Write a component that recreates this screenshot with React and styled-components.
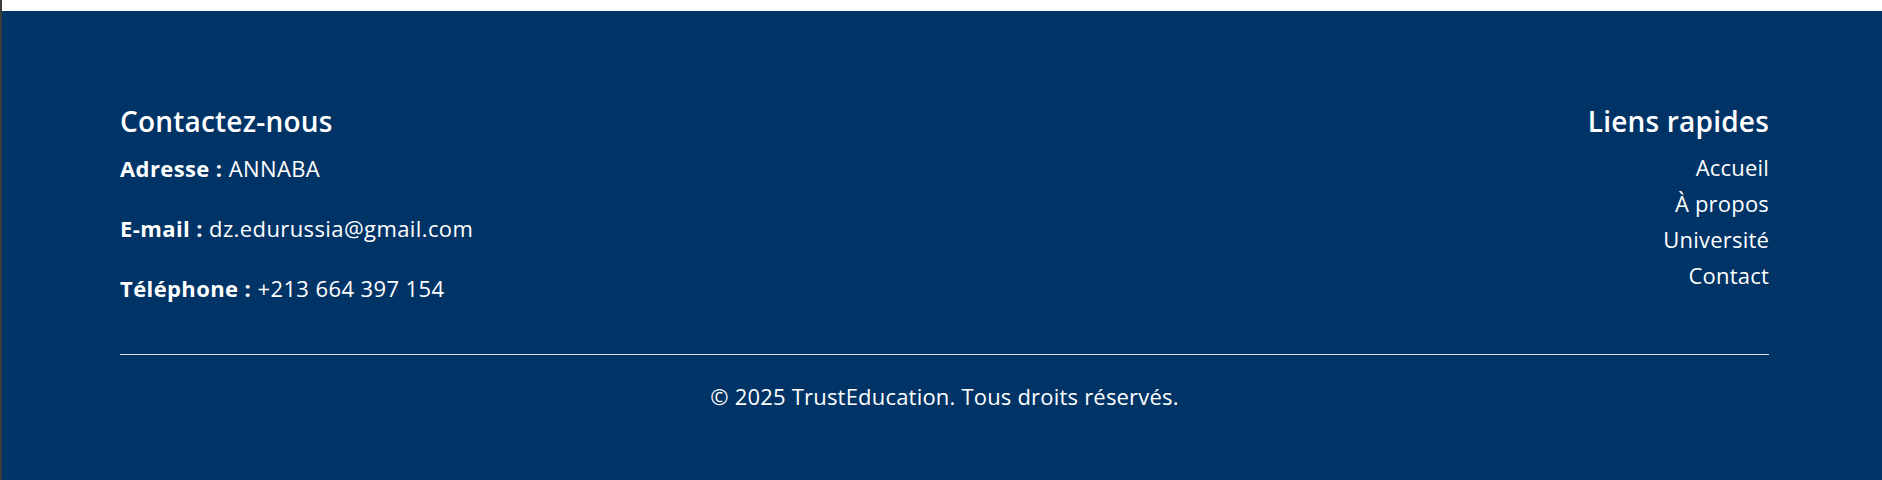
import React from 'react';
import styled, { createGlobalStyle } from 'styled-components';

const GlobalStyle = createGlobalStyle`
  html, body {
    margin: 0;
    padding: 0;
    background: #ffffff;
  }
  body {
    font-family: "Open Sans", "Noto Sans", sans-serif;
  }
`

const Page = styled.div`
  border-left: 2px solid #3b3b3b;
  padding-top: 11px;
  background: #ffffff;
  min-height: 480px;
  box-sizing: border-box;
  display: flex;
  flex-direction: column;
`

const Footer = styled.footer`
  flex: 1;
  background: #003366;
  color: #ffffff;
  padding: 93px 113px 60px 118px;
`

const Columns = styled.div`
  display: flex;
  justify-content: space-between;
  align-items: flex-start;
`

const Column = styled.div`
  display: flex;
  flex-direction: column;
  align-items: ${props => props.right ? 'flex-end' : 'flex-start'};
  text-align: ${props => props.right ? 'right' : 'left'};
`

const Heading = styled.h3`
  margin: 0;
  font-size: 28px;
  letter-spacing: 0.2px;
  line-height: 34px;
  font-weight: 600;
`

const Info = styled.p`
  margin: 0;
  font-size: 22px;
  letter-spacing: 0.4px;
  line-height: 30px;
  margin-top: ${props => props.first ? '15px' : '30px'};
`

const Label = styled.strong`
  font-weight: 700;
`

const LinkList = styled.ul`
  list-style: none;
  margin: 11px 0 0;
  padding: 0;
`

const LinkItem = styled.li`
  font-size: 22px;
  letter-spacing: 0.2px;
  line-height: 36px;
`

const FooterLink = styled.a`
  color: #ffffff;
  text-decoration: none;
`

const Rule = styled.hr`
  border: none;
  border-top: 1px solid #d8dde6;
  margin: 51px 0 0;
`

const Copyright = styled.p`
  margin: 26px 0 0;
  text-align: center;
  font-size: 22px;
  letter-spacing: 0.2px;
  line-height: 30px;
`

const contacts = [
    {label: 'Adresse :', value: 'ANNABA'},
    {label: 'E-mail :', value: 'dz.edurussia@gmail.com'},
    {label: 'Téléphone :', value: '+213 664 397 154'},
]

const links = ['Accueil', 'À propos', 'Université', 'Contact']

function App(){
    return(
        <Page>
            <GlobalStyle />
            <Footer>
                <Columns>
                    <Column>
                        <Heading>Contactez-nous</Heading>
                        {contacts.map((c, i) => (
                            <Info key={c.label} first={i === 0}>
                                <Label>{c.label}</Label> {c.value}
                            </Info>
                        ))}
                    </Column>
                    <Column right>
                        <Heading>Liens rapides</Heading>
                        <LinkList>
                            {links.map(l => (
                                <LinkItem key={l}><FooterLink href="#">{l}</FooterLink></LinkItem>
                            ))}
                        </LinkList>
                    </Column>
                </Columns>
                <Rule />
                <Copyright>© 2025 TrustEducation. Tous droits réservés.</Copyright>
            </Footer>
        </Page>
    )
}

export default App;
